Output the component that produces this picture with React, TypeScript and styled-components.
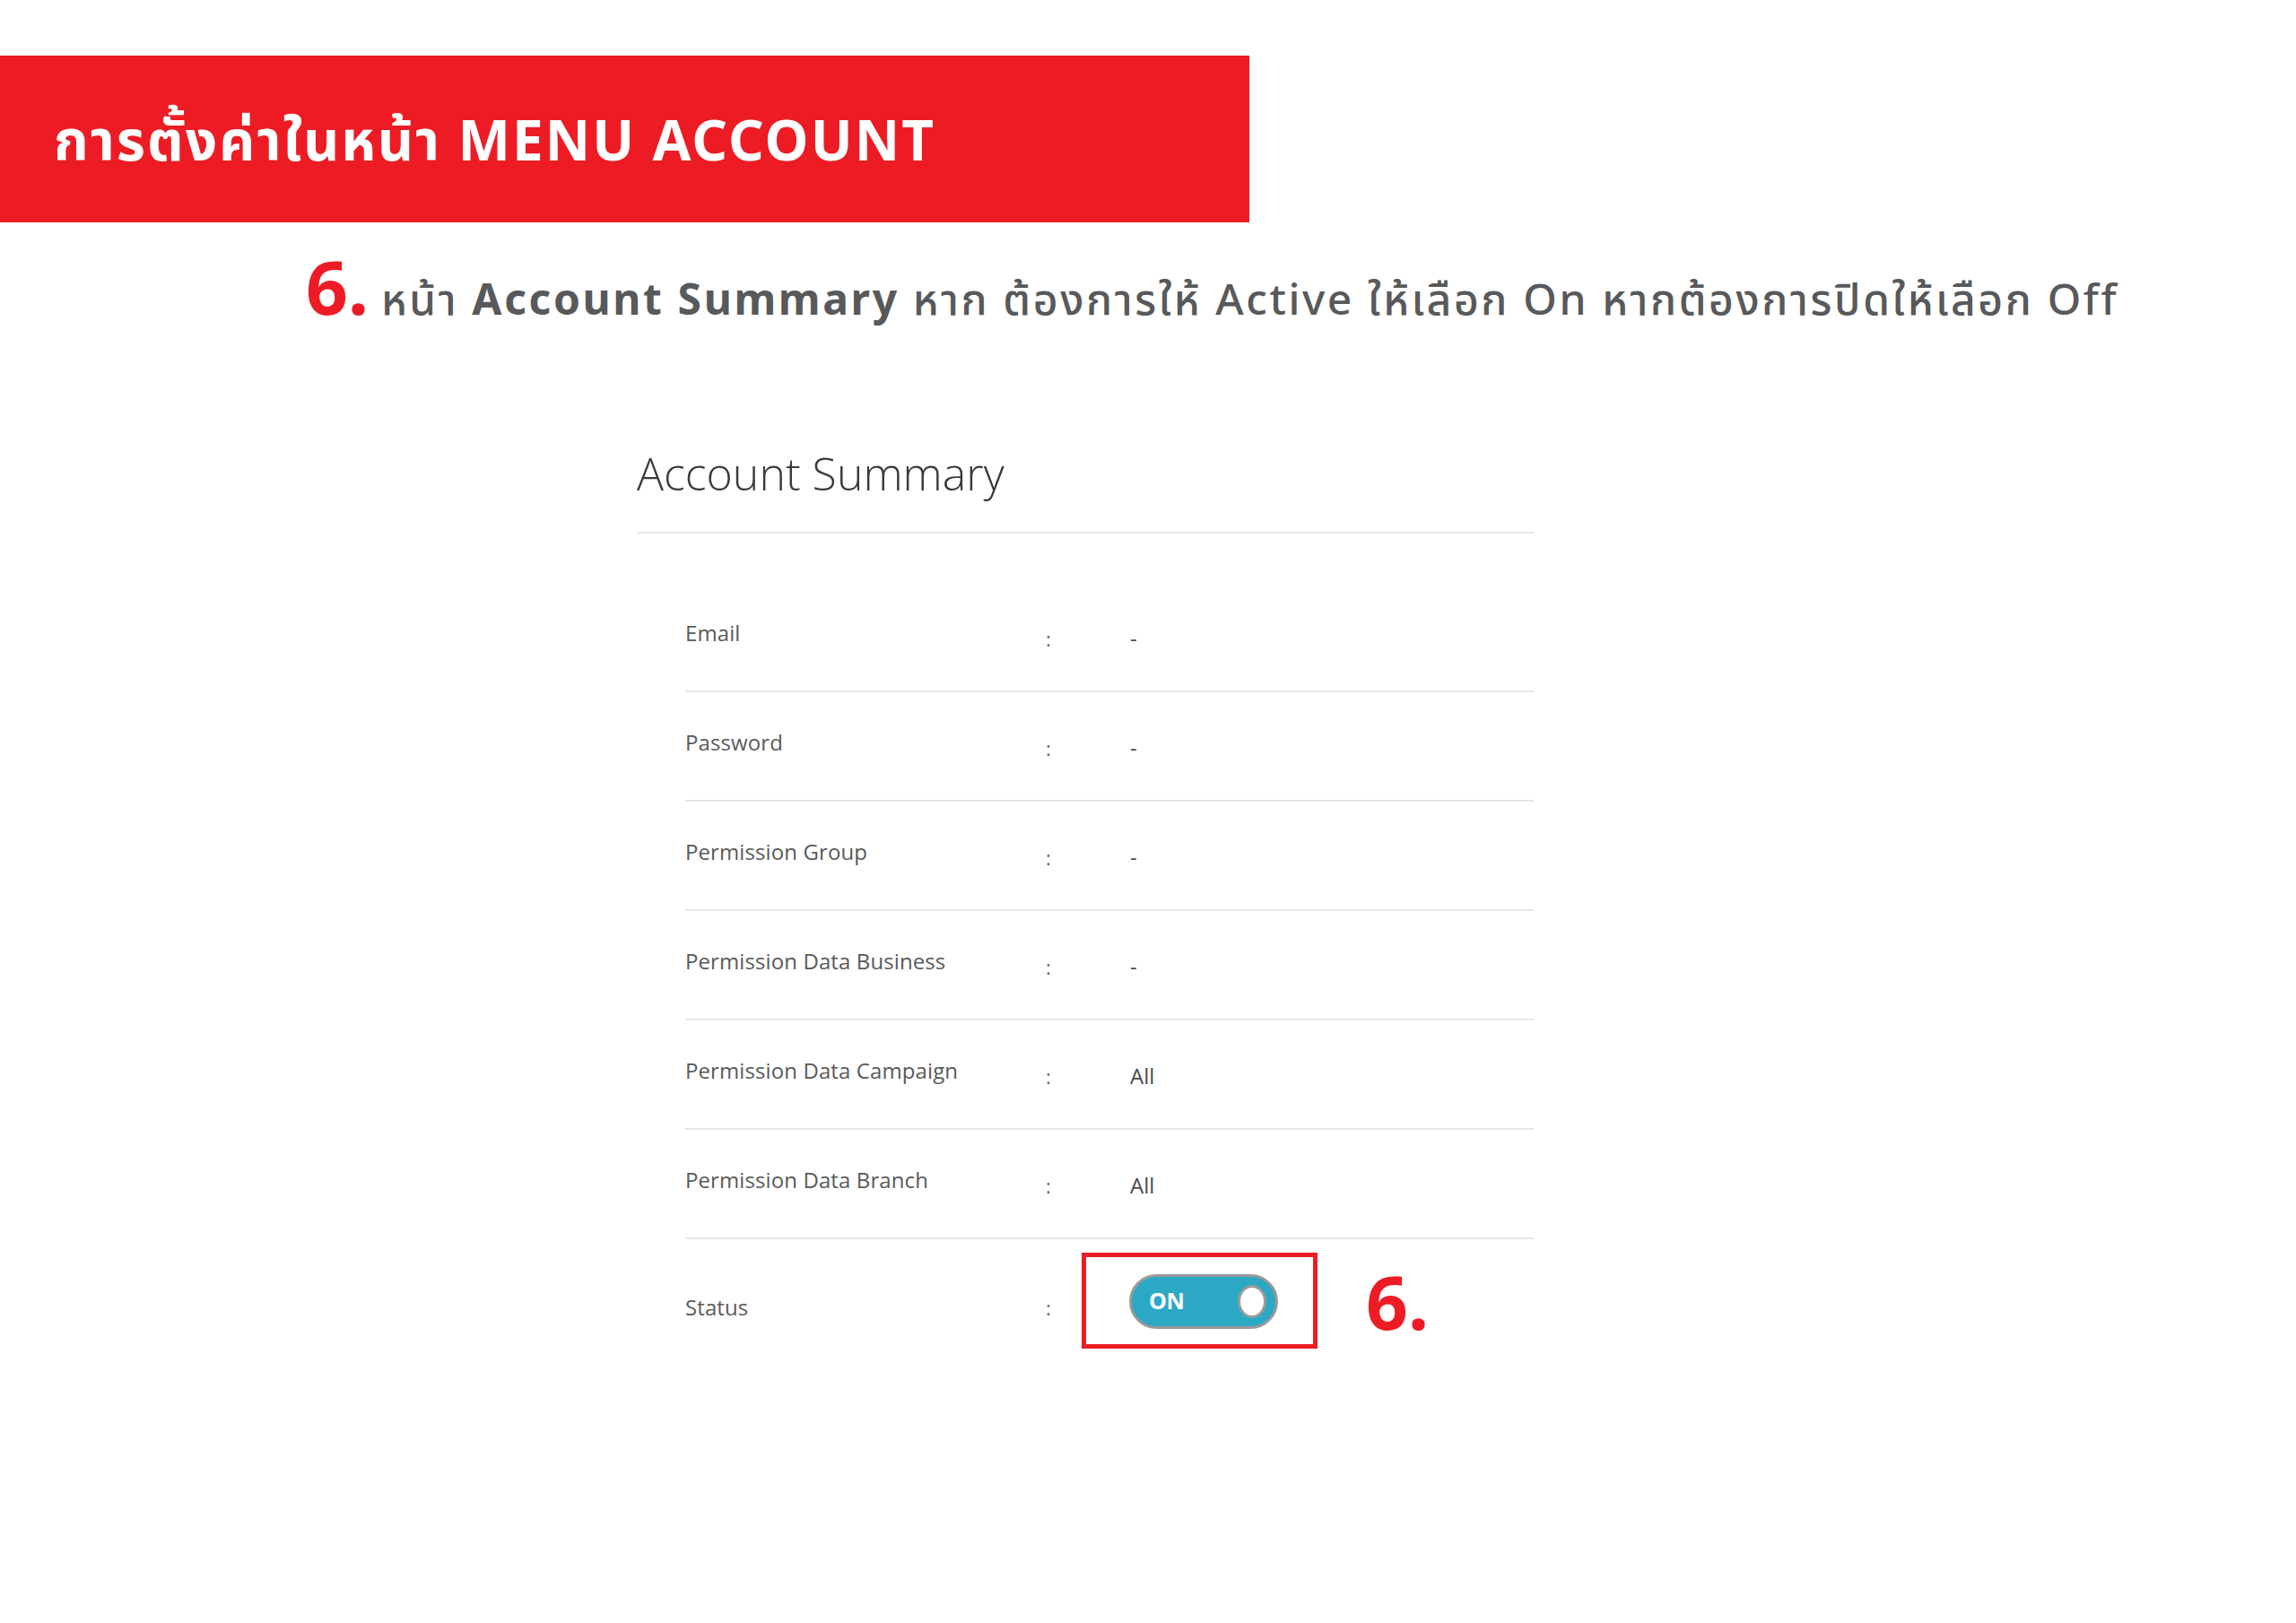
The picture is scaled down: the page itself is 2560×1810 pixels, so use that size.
import React from "react";
import styled, { createGlobalStyle } from "styled-components";

const Global = createGlobalStyle`
  html, body { margin: 0; padding: 0; background: #ffffff; }
  body { font-family: "Noto Sans", "Noto Sans Thai", "Loma", "Garuda", "DejaVu Sans", sans-serif; }
  * { box-sizing: border-box; }
`;

const Page = styled.div`
  width: 2560px;
  min-height: 1810px;
  padding-top: 62px;
  display: flex;
  flex-direction: column;
`;

const Banner = styled.div`
  width: 1393px;
  height: 186px;
  background: #ed1c24;
  display: flex;
  align-items: center;
  padding-left: 60px;
`;

const BannerTitle = styled.h1`
  margin: 0;
  color: #ffffff;
  font-family: "Noto Sans", "Noto Sans Thai", "Loma", sans-serif;
  font-weight: 700;
  font-size: 62px;
  letter-spacing: 2.1px;
  line-height: 1;
  white-space: nowrap;
`;

const Instruction = styled.div`
  display: flex;
  align-items: baseline;
  padding-left: 341px;
  margin-top: 30px;
  height: 90px;
  white-space: nowrap;
`;

const StepNumber = styled.span`
  color: #ed1c24;
  font-family: "Noto Sans", "Noto Sans Thai", sans-serif;
  font-weight: 700;
  font-size: 82px;
  line-height: 1;
`;

const InstructionText = styled.span`
  color: #58595b;
  font-family: "Noto Sans", "Noto Sans Thai", "Loma", sans-serif;
  font-weight: 500;
  font-size: 48px;
  letter-spacing: 2.6px;
  line-height: 1;
  margin-left: 14px;
  b { font-weight: 700; }
`;

const Panel = styled.section`
  margin-left: 710px;
  width: 1000px;
  margin-top: 129px;
`;

const PanelTitle = styled.h2`
  margin: 0;
  padding-bottom: 34px;
  border-bottom: 2px solid #e6e6e6;
  font-family: "Open Sans", "Noto Sans", sans-serif;
  font-weight: 300;
  font-size: 50px;
  line-height: 62px;
  color: #3a3a3a;
`;

const Rows = styled.div`
  margin-left: 54px;
  margin-top: 55px;
`;

const Row = styled.div<{ $last?: boolean }>`
  display: grid;
  grid-template-columns: 402px 94px 1fr;
  align-items: ${(p) => (p.$last ? "center" : "start")};
  height: ${(p) => (p.$last ? "auto" : "122px")};
  padding-top: ${(p) => (p.$last ? "15px" : "41px")};
  border-bottom: ${(p) => (p.$last ? "none" : "2px solid #e6e6e6")};
`;

const Label = styled.div<{ $shift?: number }>`
  font-family: "Open Sans", "Noto Sans", sans-serif;
  font-size: 24px;
  line-height: 30px;
  color: #5a5a5a;
  letter-spacing: 0.1px;
  margin-top: ${(p) => p.$shift ?? 0}px;
`;

const Colon = styled.div<{ $shift?: number }>`
  font-family: "Open Sans", "Noto Sans", sans-serif;
  font-size: 22px;
  line-height: 30px;
  color: #666;
  margin-top: ${(p) => p.$shift ?? 6}px;
`;

const Value = styled.div`
  font-family: "Open Sans", "Noto Sans", sans-serif;
  font-size: 24px;
  line-height: 30px;
  color: #4a4a4a;
  margin-top: 6px;
`;

const StatusCell = styled.div`
  display: flex;
  align-items: center;
  gap: 54px;
  margin-left: -54px;
`;

const Highlight = styled.div`
  border: 5px solid #ed1c24;
  padding: 19px 39px 17px 48px;
  display: flex;
`;

const Toggle = styled.div`
  width: 166px;
  height: 61px;
  border-radius: 31px;
  background: #2ba8c4;
  border: 3px solid #9a9a9a;
  display: flex;
  align-items: center;
  justify-content: space-between;
  padding: 0 10px 0 19px;
`;

const ToggleText = styled.span`
  color: #ffffff;
  font-family: "Open Sans", "Noto Sans", sans-serif;
  font-weight: 700;
  font-size: 25px;
  letter-spacing: -0.5px;
  margin-top: -4px;
`;

const Knob = styled.span`
  width: 32px;
  height: 37px;
  border-radius: 50%;
  background: #ffffff;
  border: 3px solid #9a9a9a;
`;

const BigStep = styled.span`
  color: #ed1c24;
  font-family: "Noto Sans", sans-serif;
  font-weight: 700;
  font-size: 82px;
  line-height: 1;
`;

const rows: [string, string][] = [
  ["Email", "-"],
  ["Password", "-"],
  ["Permission Group", "-"],
  ["Permission Data Business", "-"],
  ["Permission Data Campaign", "All"],
  ["Permission Data Branch", "All"],
];

export default function App() {
  return (
    <>
      <Global />
      <Page>
        <Banner>
          <BannerTitle>การตั้งค่าในหน้า MENU ACCOUNT</BannerTitle>
        </Banner>
        <Instruction>
          <StepNumber>6.</StepNumber>
          <InstructionText>
            หน้า <b>Account Summary</b> หาก ต้องการให้ Active ให้เลือก On หากต้องการปิดให้เลือก Off
          </InstructionText>
        </Instruction>
        <Panel>
          <PanelTitle>Account Summary</PanelTitle>
          <Rows>
            {rows.map(([label, value]) => (
              <Row key={label}>
                <Label>{label}</Label>
                <Colon>:</Colon>
                <Value>{value}</Value>
              </Row>
            ))}
            <Row $last>
              <Label $shift={14}>Status</Label>
              <Colon $shift={14}>:</Colon>
              <StatusCell>
                <Highlight>
                  <Toggle>
                    <ToggleText>ON</ToggleText>
                    <Knob />
                  </Toggle>
                </Highlight>
                <BigStep>6.</BigStep>
              </StatusCell>
            </Row>
          </Rows>
        </Panel>
      </Page>
    </>
  );
}
